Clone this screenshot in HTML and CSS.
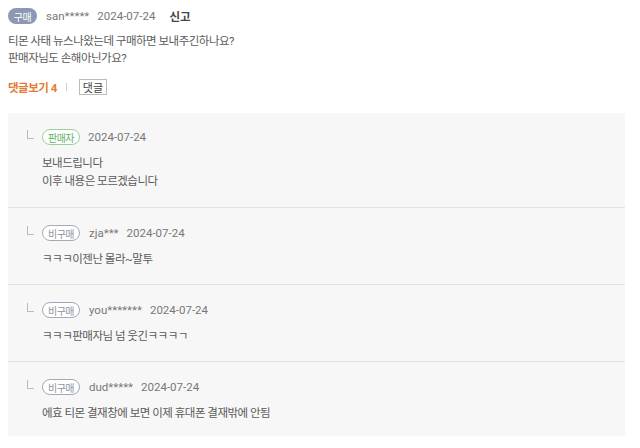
FILE: index.html
```html
<!DOCTYPE html>
<html lang="ko">
<head>
<meta charset="utf-8">
<link rel="stylesheet" href="styles.css">
</head>
<body>
<div class="review">
  <div class="meta">
    <span class="badge buy">구매</span>
    <span class="user">san*****</span>
    <span class="date">2024-07-24</span>
    <span class="report">신고</span>
  </div>
  <p class="body">티몬 사태 뉴스나왔는데 구매하면 보내주긴하나요?<br>판매자님도 손해아닌가요?</p>
  <div class="actions">
    <span class="toggle">댓글보기 4</span>
    <span class="bar"></span>
    <span class="btn">댓글</span>
  </div>
</div>
<div class="replies">
  <div class="reply first">
    <div class="meta">
      <span class="corner"></span>
      <span class="tag seller">판매자</span>
      <span class="date">2024-07-24</span>
    </div>
    <p class="rbody">보내드립니다<br>이후 내용은 모르겠습니다</p>
  </div>
  <div class="reply">
    <div class="meta">
      <span class="corner"></span>
      <span class="tag guest">비구매</span>
      <span class="user">zja***</span>
      <span class="date">2024-07-24</span>
    </div>
    <p class="rbody">ㅋㅋㅋ이젠난 몰라~말투</p>
  </div>
  <div class="reply">
    <div class="meta">
      <span class="corner"></span>
      <span class="tag guest">비구매</span>
      <span class="user">you*******</span>
      <span class="date">2024-07-24</span>
    </div>
    <p class="rbody">ㅋㅋㅋ판매자님 넘 웃긴ㅋㅋㅋㄱ</p>
  </div>
  <div class="reply last">
    <div class="meta">
      <span class="corner"></span>
      <span class="tag guest">비구매</span>
      <span class="user">dud*****</span>
      <span class="date">2024-07-24</span>
    </div>
    <p class="rbody">에효 티몬 결재창에 보면 이제 휴대폰 결재밖에 안됨</p>
  </div>
</div>
</body>
</html>
```
FILE: styles.css
```css
* { box-sizing: border-box; }
body {
  margin: 0;
  padding: 8px 15px 0 8px;
  background: #fff;
  font-family: Roboto, "Noto Sans CJK KR", sans-serif;
  font-size: 11.5px;
  color: #5a5a5a;
}
.meta {
  display: flex;
  align-items: center;
  height: 16px;
}
.badge {
  display: inline-flex;
  align-items: center;
  justify-content: center;
  height: 16px;
  width: 29px;
  border-radius: 8px;
  font-size: 10px;
  color: #fff;
  background: #8c99b4;
  letter-spacing: -0.5px;
}
.user { margin-left: 9px; color: #777; }
.date { margin-left: 8px; color: #777; }
.report { margin-left: 14px; color: #444; font-weight: 700; }
.body {
  margin: 9px 0 0;
  line-height: 17px;
  letter-spacing: -0.5px;
}
.actions {
  display: flex;
  align-items: center;
  margin-top: 12px;
  height: 16px;
}
.toggle { color: #e47a33; font-weight: 700; font-size: 11.5px; letter-spacing: -0.5px; }
.bar { width: 1px; height: 8px; background: #ccc; margin: 0 12px 0 9px; }
.btn {
  display: inline-flex;
  align-items: center;
  height: 16px;
  padding: 0 3px;
  border: 1px solid #bbb;
  font-size: 11px;
  color: #444;
}
.replies {
  margin-top: 18px;
  width: 617px;
  background: #f7f7f7;
}
.reply {
  padding: 17px 19px 16px;
  border-top: 1px solid #e2e2e2;
}
.reply.first { border-top: 0; padding-top: 16px; padding-bottom: 17px; }
.reply.last { padding-bottom: 14px; }
.corner {
  width: 7px;
  height: 9px;
  border-left: 1px solid #bbb;
  border-bottom: 1px solid #bbb;
  margin: -6px 8px 0 0;
}
.tag {
  display: inline-flex;
  align-items: center;
  justify-content: center;
  height: 16px;
  width: 38px;
  border-radius: 8px;
  font-size: 10px;
  background: #fff;
  letter-spacing: -0.5px;
}
.tag.seller { border: 1px solid #9dcf9d; color: #5fb35f; }
.tag.guest { border: 1px solid #a2a9b8; color: #8c93a3; }
.rbody {
  margin: 9px 0 0 15px;
  line-height: 18px;
  letter-spacing: -0.5px;
}
```
